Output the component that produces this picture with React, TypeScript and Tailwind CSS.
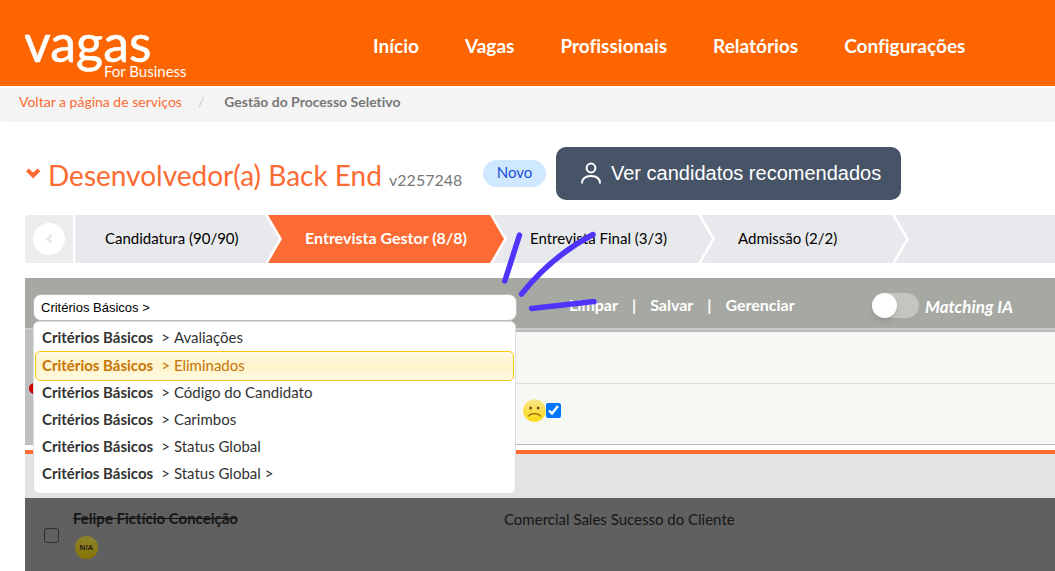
import { useState } from 'react'
import { clsx } from 'clsx'

const NAV = ['Início', 'Vagas', 'Profissionais', 'Relatórios', 'Configurações']

const STEPS = [
  { label: 'Candidatura (90/90)', width: 'w-[204px]' },
  { label: 'Entrevista Gestor (8/8)', width: 'w-[236px]' },
  { label: 'Entrevista Final (3/3)', width: 'w-[219px]' },
  { label: 'Admissão (2/2)', width: 'w-[205px]' },
]

const SUGGESTIONS = [
  'Avaliações',
  'Eliminados',
  'Código do Candidato',
  'Carimbos',
  'Status Global',
  'Status Global >',
]

function Header() {
  return (
    <header className="flex h-[86px] items-center bg-[#fd6500] text-white">
      <a href="#" aria-label="vagas For Business" className="ml-[25px] w-[348px] shrink-0">
        <svg width="170" height="86" viewBox="0 0 170 86" fill="#fff" className="font-['Lato',sans-serif]">
          <text x="-1" y="62" fontSize="52" stroke="#fff" strokeWidth="0.6">vagas</text>
          <text x="79" y="77" fontSize="15">For Business</text>
        </svg>
      </a>
      <nav className="flex gap-[46px] pt-1.5 text-[19px] leading-6 font-bold">
        {NAV.map((item) => (
          <a key={item} href="#">{item}</a>
        ))}
      </nav>
    </header>
  )
}

function Breadcrumb() {
  return (
    <nav className="mt-0.5 flex h-[34px] items-center gap-4 rounded-l bg-[#f4f4f4] pb-1.5 pl-[19px] text-sm leading-5">
      <a href="#" className="text-[#fb6b33]">Voltar a página de serviços</a>
      <span className="text-[#ccc]">/</span>
      <span className="pl-1 font-bold text-[#777]">Gestão do Processo Seletivo</span>
    </nav>
  )
}

function TitleRow() {
  return (
    <div className="mt-[25px] flex h-[53px] items-center pl-[26px]">
      <svg width="15" height="11" viewBox="0 0 15 11" className="shrink-0">
        <path d="M0 3.2 2.8 0.4 7.2 4.6 11.6 0.4 14.4 3.2 7.2 10.4Z" fill="#fb6b33" />
      </svg>
      <h1 className="ml-[7px] w-[435px] shrink-0 pt-0.5 text-[28px] leading-9 text-[#fb6b33]">
        Desenvolvedor(a) Back End <span className="text-base text-[#777]">v2257248</span>
      </h1>
      <span className="flex h-[27px] w-[63px] shrink-0 items-center justify-center rounded-full bg-[#cfe7ff] pb-0.5 text-[15px] text-[#1a4fd6]">
        Novo
      </span>
      <button
        type="button"
        className="ml-2.5 flex h-[53px] w-[345px] shrink-0 items-center rounded-[10px] bg-[#475467] pb-0.5 pl-[25px] font-['Liberation_Sans',sans-serif] text-xl text-white"
      >
        <svg width="20" height="22" viewBox="0 0 20 22" fill="none" stroke="#fff" strokeWidth="2" className="mr-2.5">
          <circle cx="10" cy="6" r="4.4" />
          <path d="M1 21.5C1 16.5 4.5 14 10 14s9 2.5 9 7.5" />
        </svg>
        Ver candidatos recomendados
      </button>
    </div>
  )
}

function Steps() {
  const [active, setActive] = useState(1)

  return (
    <div className="mt-[15px] ml-[25px] flex h-12 text-[15px]">
      <button
        type="button"
        aria-label="Anterior"
        className="mr-0.5 flex w-12 shrink-0 items-center justify-center rounded-l bg-[#ececec]"
      >
        <span className="flex size-8 items-center justify-center rounded-full bg-white">
          <svg width="8" height="10" viewBox="0 0 8 10" fill="none" stroke="#e6e6e6" strokeWidth="2.6">
            <path d="M6.5 1 2.5 5l4 4" />
          </svg>
        </span>
      </button>
      {STEPS.map((step, i) => (
        <button
          key={step.label}
          type="button"
          onClick={() => setActive(i)}
          className={clsx(
            'shrink-0 pb-0.5 text-left',
            step.width,
            i === 0
              ? 'pl-[30px] [clip-path:polygon(0_0,calc(100%-14px)_0,100%_50%,calc(100%-14px)_100%,0_100%)]'
              : '-ml-[11px] pl-[37px] [clip-path:polygon(0_0,calc(100%-14px)_0,100%_50%,calc(100%-14px)_100%,0_100%,14px_50%)]',
            i === active ? 'bg-[#fb6b33] text-base font-bold text-white' : 'bg-[#e8e9ed] text-black',
          )}
        >
          {step.label}
        </button>
      ))}
      <div className="-ml-[11px] grow bg-[#e8e9ed] [clip-path:polygon(0_0,100%_0,100%_100%,0_100%,14px_50%)]" />
    </div>
  )
}

function CriteriaBox() {
  const [value, setValue] = useState('Critérios Básicos >')

  return (
    <div className="relative z-10 ml-2 w-[484px] shrink-0 font-normal">
      <input
        type="text"
        aria-label="Critérios"
        value={value}
        onChange={(e) => setValue(e.target.value)}
        className="block h-[27px] w-full rounded-lg border border-[#bbb] bg-white px-[7px] font-['Liberation_Sans',sans-serif] text-[13px] text-black"
      />
      <ul className="absolute top-[27px] left-0 w-[483px] rounded-md border border-[#ddd] bg-white px-px pt-0.5 pb-1.5 text-[15px] text-[#333]">
        {SUGGESTIONS.map((item, i) => (
          <li
            key={item}
            className={clsx(
              'flex items-center gap-1 rounded-[5px] pb-0.5',
              i === 1
                ? '-mb-0.5 h-[30px] border border-[#fcc80f] bg-linear-to-b from-[#fffae6] via-[#fff3ca] via-50% to-[#fffae2] px-1.5 text-[#c77405]'
                : 'h-[27px] px-[7px]',
            )}
          >
            <b className="pr-1">Critérios Básicos</b>
            <span>&gt;</span>
            <span>{item}</span>
          </li>
        ))}
      </ul>
    </div>
  )
}

function FilterBar() {
  return (
    <div className="mt-[15px] flex h-[52px] items-start border-b-2 border-[#cbcbcb] bg-[#a6a9a2] pt-4 text-base leading-6 font-bold text-white">
      <CriteriaBox />
      <div className="-mt-px ml-[52px] flex gap-3.5">
        <button type="button">Limpar</button>
        <span>|</span>
        <button type="button">Salvar</button>
        <span>|</span>
        <button type="button">Gerenciar</button>
      </div>
      <label className="-mt-[3px] mr-[42px] ml-auto flex shrink-0 items-center gap-1.5 text-[17px] italic">
        <input
          type="checkbox"
          role="switch"
          className="h-[25px] w-[47px] appearance-none rounded-full bg-[#c3c5bf] before:block before:size-[25px] before:rounded-full before:bg-white before:shadow-md before:content-[''] checked:before:ml-[22px]"
        />
        <span className="pt-1">Matching IA</span>
      </label>
    </div>
  )
}

function SadFace() {
  return (
    <svg width="23" height="23" viewBox="0 0 23 23">
      <defs>
        <linearGradient id="sad" x1="0" y1="0" x2="0" y2="1">
          <stop offset="0" stopColor="#fbe58a" />
          <stop offset="1" stopColor="#fbd90f" />
        </linearGradient>
      </defs>
      <circle cx="11.5" cy="11.5" r="11.3" fill="url(#sad)" />
      <ellipse cx="7.7" cy="9" rx="1.4" ry="1.6" fill="#6b4a1c" />
      <ellipse cx="15.1" cy="9" rx="1.4" ry="1.6" fill="#6b4a1c" />
      <path d="M5.4 17.6c1.8-4 10.4-4 12.2 0" fill="none" stroke="#97690d" strokeWidth="1.3" />
    </svg>
  )
}

function FilterPanel() {
  return (
    <div className="flex h-[115px] border-t-2 border-b border-[#bbb] bg-[#f7f7f3]">
      <div className="w-5 bg-[#bfbfbf] pt-[51px] pl-1">
        <div className="size-[11px] rounded-full bg-[#cc0000]" />
      </div>
      <div className="grow">
        <div className="h-[52px] border-b border-[#ddd]" />
        <div className="flex items-center pt-[15px] pl-[478px]">
          <SadFace />
          <input type="checkbox" defaultChecked aria-label="Insatisfeito" className="size-[15px] accent-[#0075ff]" />
        </div>
      </div>
    </div>
  )
}

function CandidateRow() {
  return (
    <div className="flex h-[73px] bg-[#606060] text-[15px] leading-5 text-[#161616]">
      <div className="flex w-12 shrink-0 items-center pt-0.5 pl-[19px]">
        <input
          type="checkbox"
          aria-label="Felipe Fictício Conceição"
          className="size-[15px] appearance-none rounded-[3px] border border-[#2f2f2f]"
        />
      </div>
      <div className="w-[431px] shrink-0 pt-2.5">
        <p className="font-bold line-through">Felipe Fictício Conceição</p>
        <span className="mt-2 ml-0.5 flex size-[23px] items-center justify-center rounded-full bg-linear-to-b from-[#8f8328] to-[#857400] font-['Liberation_Sans',sans-serif] text-[8px] font-bold text-[#2b1b10]">
          N/A
        </span>
      </div>
      <p className="pt-[11px]">Comercial Sales Sucesso do Cliente</p>
    </div>
  )
}

// hand-drawn strokes pointing at the criteria field
function Highlight() {
  return (
    <svg
      width="98"
      height="84"
      viewBox="0 0 98 84"
      fill="none"
      stroke="#4f35fb"
      strokeWidth="5.5"
      strokeLinecap="round"
      className="pointer-events-none absolute top-[230px] left-[500px] z-20"
    >
      <path d="M19.5 5 4.8 51" />
      <path d="M93 4.5Q52 26 21.5 64" />
      <path d="M31.5 78.5 94 71.5" />
    </svg>
  )
}

export default function App() {
  return (
    <div className="relative overflow-hidden bg-white font-['Trebuchet_MS','Lato',sans-serif] [font-variant-ligatures:none]">
      <Header />
      <Breadcrumb />
      <TitleRow />
      <Steps />
      <main className="ml-[25px]">
        <FilterBar />
        <FilterPanel />
        <div className="mt-[5px] h-12 border-t-4 border-[#fb6b33] bg-[#e3e3e1]" />
        <CandidateRow />
      </main>
      <Highlight />
    </div>
  )
}
